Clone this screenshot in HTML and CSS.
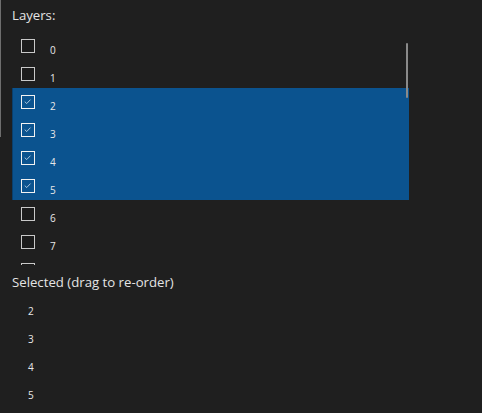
FILE: index.html
```html
<!DOCTYPE html>
<html>
<head>
<meta charset="utf-8">
<link rel="stylesheet" href="styles.css">
</head>
<body>
<div class="edge"></div>
<div class="panel">
  <div class="heading">Layers:</div>
  <div class="list">
    <div class="rows">
      <div class="row"><span class="box"></span><span class="num">0</span></div>
      <div class="row"><span class="box"></span><span class="num">1</span></div>
      <div class="row sel"><span class="box on"><svg viewBox="0 0 14 14"><path d="M3.5 7.2 L6 9.6 L10.8 4.6"/></svg></span><span class="num">2</span></div>
      <div class="row sel"><span class="box on"><svg viewBox="0 0 14 14"><path d="M3.5 7.2 L6 9.6 L10.8 4.6"/></svg></span><span class="num">3</span></div>
      <div class="row sel"><span class="box on"><svg viewBox="0 0 14 14"><path d="M3.5 7.2 L6 9.6 L10.8 4.6"/></svg></span><span class="num">4</span></div>
      <div class="row sel"><span class="box on"><svg viewBox="0 0 14 14"><path d="M3.5 7.2 L6 9.6 L10.8 4.6"/></svg></span><span class="num">5</span></div>
      <div class="row"><span class="box"></span><span class="num">6</span></div>
      <div class="row"><span class="box"></span><span class="num">7</span></div>
      <div class="row"><span class="box"></span></div>
    </div>
    <div class="thumb"></div>
  </div>
  <div class="heading heading2">Selected (drag to re-order)</div>
  <div class="chosen">
    <div class="item">2</div>
    <div class="item">3</div>
    <div class="item">4</div>
    <div class="item">5</div>
  </div>
</div>
</body>
</html>
```
FILE: styles.css
```css
html, body {
  margin: 0;
  padding: 0;
  background: #1f1f1f;
  width: 482px;
  height: 413px;
  overflow: hidden;
}
body {
  position: relative;
  font-family: "Open Sans", "Noto Sans", sans-serif;
  color: #e6e6e6;
}
.edge {
  position: absolute;
  left: 0;
  top: 0;
  width: 1px;
  height: 137px;
  background: #6e6e6e;
}
.panel {
  padding: 0 0 0 12px;
  display: flex;
  flex-direction: column;
}
.heading {
  font-size: 13.2px;
  line-height: 18px;
  height: 18px;
  padding-top: 6px;
  margin-bottom: 8px;
  color: #e4e4e4;
}
.list {
  position: relative;
  width: 397px;
  height: 233px;
  overflow: hidden;
}
.rows {
  display: flex;
  flex-direction: column;
}
.row {
  height: 28px;
  display: flex;
  align-items: flex-start;
  box-sizing: border-box;
}
.row.sel {
  background: #0b538f;
  border-left: 1px solid #0a3f6c;
}
.row.sel .box { margin-left: 8px; }
.box {
  margin: 7px 0 0 9px;
  width: 14px;
  height: 14px;
  box-sizing: border-box;
  border: 1.5px solid #c9c9c9;
  background: #1b1b1b;
  flex: none;
  display: block;
}
.box.on {
  border-color: #f2f2f2;
  background: transparent;
}
.box svg {
  display: block;
  width: 11px;
  height: 11px;
}
.box svg path {
  fill: none;
  stroke: #d8e4f0;
  stroke-width: 1;
}
.num {
  font-size: 10px;
  line-height: 12px;
  margin: 12px 0 0 15px;
  color: #e8e8e8;
}
.thumb {
  position: absolute;
  left: 394px;
  top: 11px;
  width: 2px;
  height: 55px;
  background: #8a8a8a;
  border-radius: 1px;
}
.heading2 {
  padding-top: 8px;
  margin-bottom: 14px;
}
.chosen {
  display: flex;
  flex-direction: column;
  padding-left: 16px;
}
.item {
  height: 28px;
  font-size: 10px;
  line-height: 12px;
  color: #e8e8e8;
}
```
